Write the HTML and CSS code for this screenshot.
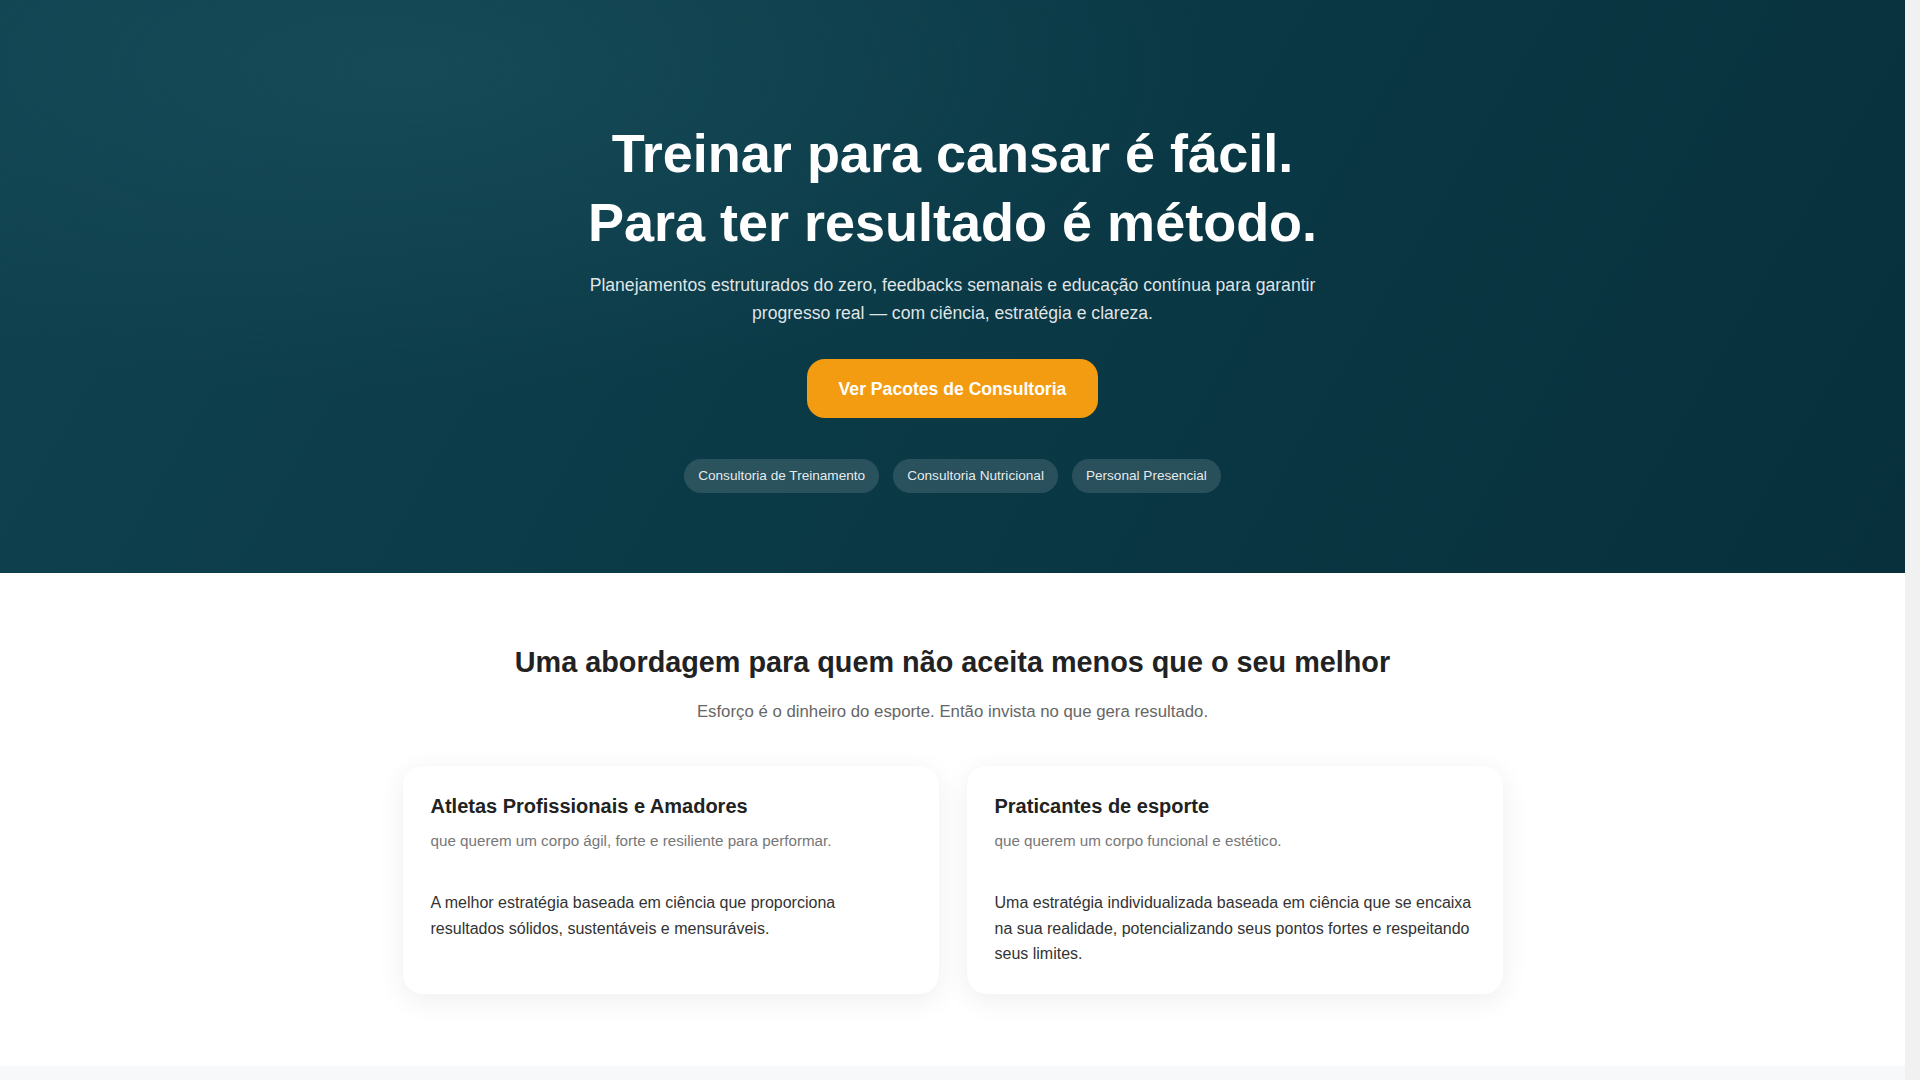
FILE: index.html
```html
<!DOCTYPE html>
<html lang="pt-BR">
<head>
<meta charset="utf-8">
<title>Consultoria</title>
<link rel="stylesheet" href="styles.css">
</head>
<body>
<div class="page">
  <section class="hero">
    <h1 class="hero-title">Treinar para cansar é fácil.<br>Para ter resultado é método.</h1>
    <p class="hero-sub">Planejamentos estruturados do zero, feedbacks semanais e educação contínua para garantir progresso real — com ciência, estratégia e clareza.</p>
    <a class="cta" href="#pacotes">Ver Pacotes de Consultoria</a>
    <div class="tags">
      <span class="tag">Consultoria de Treinamento</span>
      <span class="tag">Consultoria Nutricional</span>
      <span class="tag">Personal Presencial</span>
    </div>
  </section>

  <section class="approach">
    <h2 class="section-title">Uma abordagem para quem não aceita menos que o seu melhor</h2>
    <p class="section-sub">Esforço é o dinheiro do esporte. Então invista no que gera resultado.</p>
    <div class="cards">
      <article class="card">
        <h3 class="card-title">Atletas Profissionais e Amadores</h3>
        <p class="card-sub">que querem um corpo ágil, forte e resiliente para performar.</p>
        <p class="card-text">A melhor estratégia baseada em ciência que proporciona resultados sólidos, sustentáveis e mensuráveis.</p>
      </article>
      <article class="card">
        <h3 class="card-title">Praticantes de esporte</h3>
        <p class="card-sub">que querem um corpo funcional e estético.</p>
        <p class="card-text">Uma estratégia individualizada baseada em ciência que se encaixa na sua realidade, potencializando seus pontos fortes e respeitando seus limites.</p>
      </article>
    </div>
  </section>

  <section class="next" id="pacotes"></section>
</div>
<div class="scrollbar" aria-hidden="true"></div>
</body>
</html>
```

FILE: styles.css
```css
* {
  box-sizing: border-box;
}

html, body {
  margin: 0;
  padding: 0;
}

body {
  font-family: "Liberation Sans", Arial, sans-serif;
  color: #222;
  background: #ffffff;
}

.page {
  margin-right: 15px;
}

.scrollbar {
  position: fixed;
  top: 0;
  right: 0;
  width: 15px;
  height: 100vh;
  background: #f1f1f1;
}

.hero {
  display: flex;
  flex-direction: column;
  align-items: center;
  text-align: center;
  padding: 119px 20px 80px;
  color: #fff;
  background:
    radial-gradient(ellipse 60% 80% at 22% 12%, rgba(30, 86, 98, 0.5), rgba(30, 86, 98, 0) 70%),
    linear-gradient(120deg, #104250 0%, #0b3a47 45%, #07303c 100%);
}

.hero-title {
  margin: 0;
  font-size: 54px;
  line-height: 68.6px;
  font-weight: 700;
  color: #ffffff;
}

.hero-sub {
  margin: 15px 0 0;
  max-width: 760px;
  font-size: 17.6px;
  line-height: 28px;
  color: rgba(255, 255, 255, 0.88);
}

.cta {
  margin-top: 32px;
  display: inline-block;
  background: #f39c12;
  color: #ffffff;
  text-decoration: none;
  font-weight: 700;
  font-size: 17.6px;
  line-height: 20px;
  padding: 19.5px 32px;
  border-radius: 18px;
}

.tags {
  margin-top: 41px;
  display: flex;
  gap: 14px;
  justify-content: center;
}

.tag {
  display: inline-block;
  background: rgba(255, 255, 255, 0.13);
  color: rgba(255, 255, 255, 0.9);
  font-size: 13.6px;
  line-height: 16px;
  padding: 9px 14px;
  border-radius: 17px;
}

.approach {
  padding: 72px 20px 72px;
  display: flex;
  flex-direction: column;
  align-items: center;
  text-align: center;
}

.section-title {
  margin: 0;
  font-size: 28.8px;
  line-height: 34px;
  font-weight: 700;
  color: #222;
}

.section-sub {
  margin: 20px 0 0;
  font-size: 16.8px;
  line-height: 25px;
  color: #666;
}

.cards {
  margin-top: 42px;
  width: 100%;
  max-width: 1100px;
  display: grid;
  grid-template-columns: 1fr 1fr;
  gap: 28px;
  text-align: left;
}

.card {
  background: #ffffff;
  border-radius: 20px;
  padding: 28px 28px 27px;
  box-shadow: 0 6px 28px rgba(0, 0, 0, 0.07);
}

.card-title {
  margin: 0;
  font-size: 20px;
  line-height: 24px;
  font-weight: 700;
  color: #222;
}

.card-sub {
  margin: 12px 0 0;
  font-size: 15.2px;
  line-height: 22px;
  color: #777;
}

.card-text {
  margin: 38px 0 0;
  font-size: 16px;
  line-height: 25.6px;
  color: #333;
}

.next {
  background: #f7f8f9;
  min-height: 400px;
}
```
